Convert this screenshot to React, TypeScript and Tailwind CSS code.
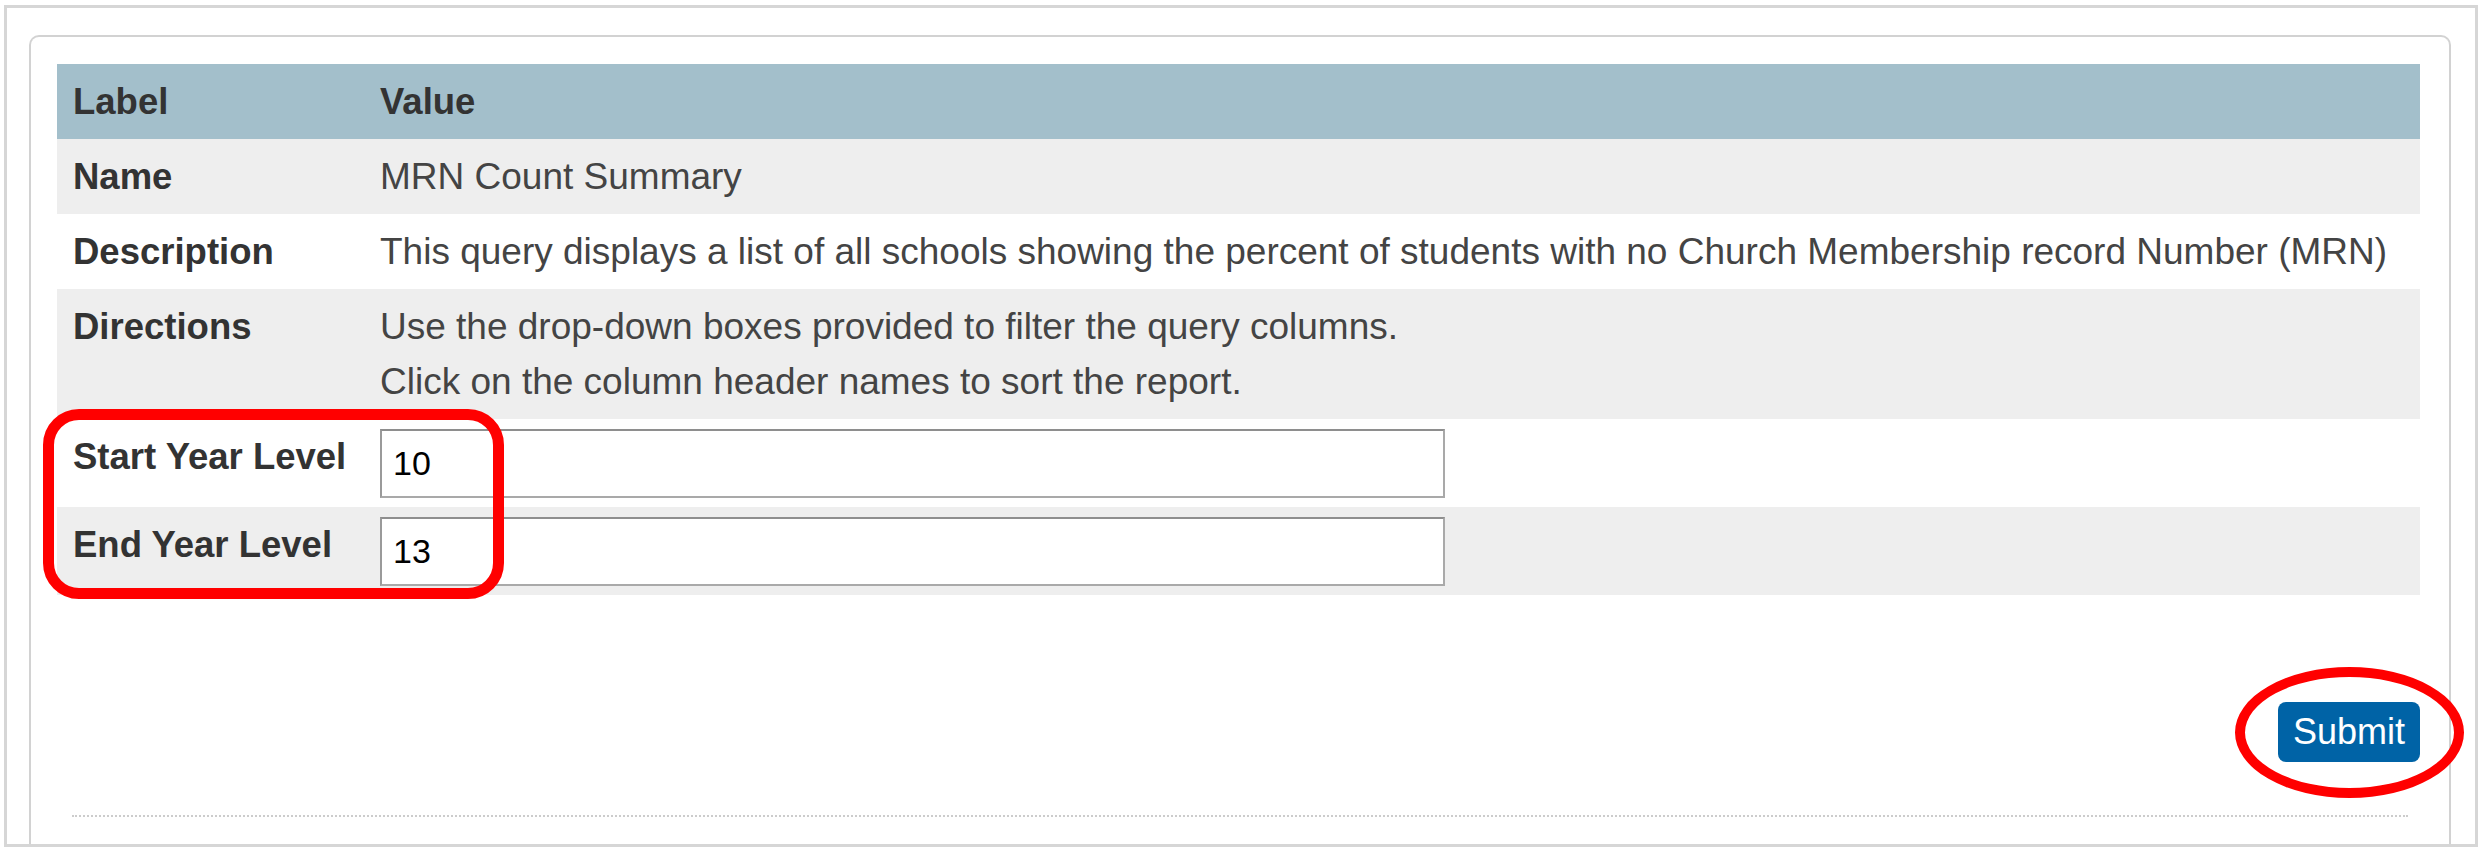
import React from "react";

const Row = ({
  label,
  children,
  bg,
}: {
  label: string;
  children: React.ReactNode;
  bg: string;
}) => (
  <div className={`flex ${bg}`}>
    <div className="w-[307px] shrink-0 pl-4 py-[10px] leading-[55px] text-[36.5px] font-bold text-[#333]">
      {label}
    </div>
    <div className="flex-1 pl-4 py-[10px] leading-[55px] text-[37px] text-[#444]">{children}</div>
  </div>
);

const InputRow = ({ label, value, bg }: { label: string; value: string; bg: string }) => (
  <div className={`flex ${bg} pt-[10px] pb-[9px]`}>
    <div className="w-[307px] shrink-0 pl-4 leading-[55px] text-[36.5px] font-bold text-[#333]">{label}</div>
    <div className="flex-1 pl-4">
      <input
        readOnly
        value={value}
        className="w-[1065px] h-[69px] border-2 border-[#a9a9a9] border-t-[#8e8e8e] border-l-[#9a9a9a] bg-white px-[11px] text-[34px] text-black outline-none font-['Liberation_Sans',Arial,sans-serif]"
      />
    </div>
  </div>
);

export default function App() {
  return (
    <div className="w-[2484px] h-[850px] bg-white pt-[5px] pl-[4px] pr-[6px] pb-[3px] font-['Liberation_Sans',Arial,sans-serif]">
      <div className="h-full border-[3px] border-[#d6d6d6] pt-[27px] pl-[22px] pr-[24px] flex flex-col">
        <div className="relative flex-1 border-2 border-b-0 border-[#d2d2d2] rounded-t-[10px] pt-[27px] pl-[26px] pr-[29px]">
          <div className="flex flex-col">
            <div className="flex bg-[#a3bfcb]">
              <div className="w-[307px] shrink-0 pl-4 py-[10px] leading-[55px] text-[36.5px] font-bold text-[#333]">
                Label
              </div>
              <div className="flex-1 pl-4 py-[10px] leading-[55px] text-[36.5px] font-bold text-[#333]">Value</div>
            </div>
            <Row label="Name" bg="bg-[#eeeeee]">
              MRN Count Summary
            </Row>
            <Row label="Description" bg="bg-white">
              This query displays a list of all schools showing the percent of students with no Church Membership
              record Number (MRN)
            </Row>
            <Row label="Directions" bg="bg-[#eeeeee]">
              <div>Use the drop-down boxes provided to filter the query columns.</div>
              <div>Click on the column header names to sort the report.</div>
            </Row>
            <InputRow label="Start Year Level" value="10" bg="bg-white" />
            <InputRow label="End Year Level" value="13" bg="bg-[#eeeeee]" />
          </div>

          <div className="flex justify-end mt-[107px]">
            <button className="h-[60px] px-[15px] rounded-[8px] bg-[#0063a6] text-white text-[36px] leading-none">
              Submit
            </button>
          </div>

          <div className="mt-[53px] ml-[15px] mr-[12px] border-t-2 border-dotted border-[#cccccc]" />

          <div className="absolute left-[12px] top-[372px] w-[461px] h-[190px] border-[11px] border-[#ff0000] rounded-[36px] pointer-events-none" />
          <div className="absolute left-[2204px] top-[630px] w-[229px] h-[131px] border-[10px] border-[#ff0000] rounded-[50%] pointer-events-none" />
        </div>
      </div>
    </div>
  );
}
